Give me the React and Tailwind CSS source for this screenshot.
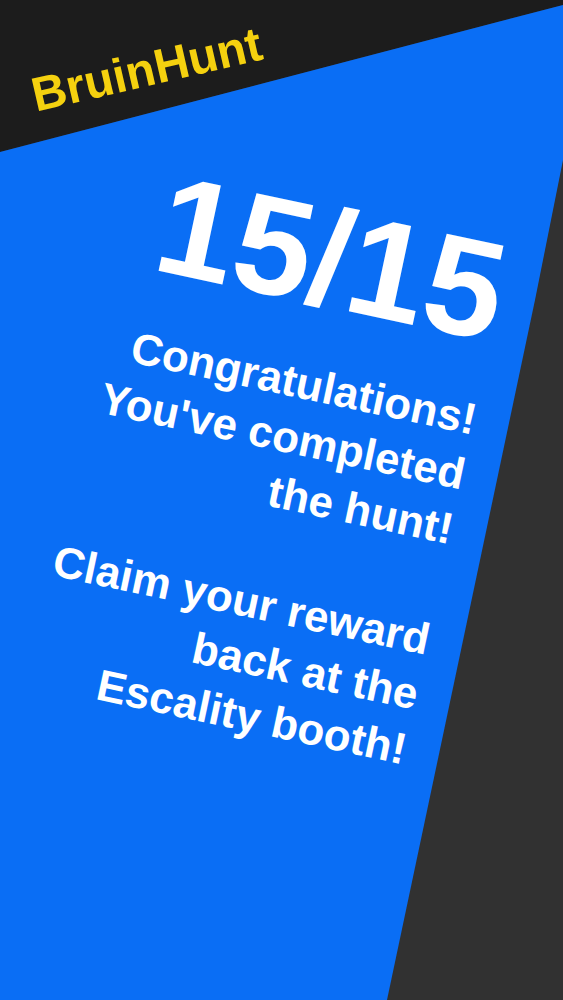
import React from 'react';

const font = "font-['Liberation_Sans',Arial,sans-serif]";

const App = () => {
  return (
    <div className={`relative grid h-[1000px] w-full overflow-hidden bg-[#313131] ${font}`}>
      {/* Backdrop shapes */}
      <div className="absolute inset-0 bg-[#1c1c1c] [clip-path:polygon(0_0,100%_0,100%_5px,0_152px)]" />
      <div className="absolute inset-0 bg-[#0a6ef5] [clip-path:polygon(0_152px,100%_5px,100%_160px,535px_300px,387px_100%,0_100%)]" />

      {/* Header */}
      <div className="relative [grid-area:1/1] h-0 origin-top-left rotate-[-13deg]">
        <p className="pl-[10px] pt-[77px] text-[48px] leading-none font-bold whitespace-nowrap text-[#f5d10f]">
          BruinHunt
        </p>
      </div>

      {/* Result */}
      <div className="relative [grid-area:1/1] w-[553px] h-0 origin-top-left rotate-[12deg] text-right text-white">
        <div className="pt-[114px] text-[140px] leading-none font-bold">15/15</div>
        <div className="mt-[30px] text-[44px] leading-[56px] font-bold">
          <p>
            Congratulations!
            <br />
            You've completed
            <br />
            the hunt!
          </p>
          <p className="mt-[57px]">
            Claim your reward
            <br />
            back at the
            <br />
            Escality booth!
          </p>
        </div>
      </div>
    </div>
  );
};

export default App;
